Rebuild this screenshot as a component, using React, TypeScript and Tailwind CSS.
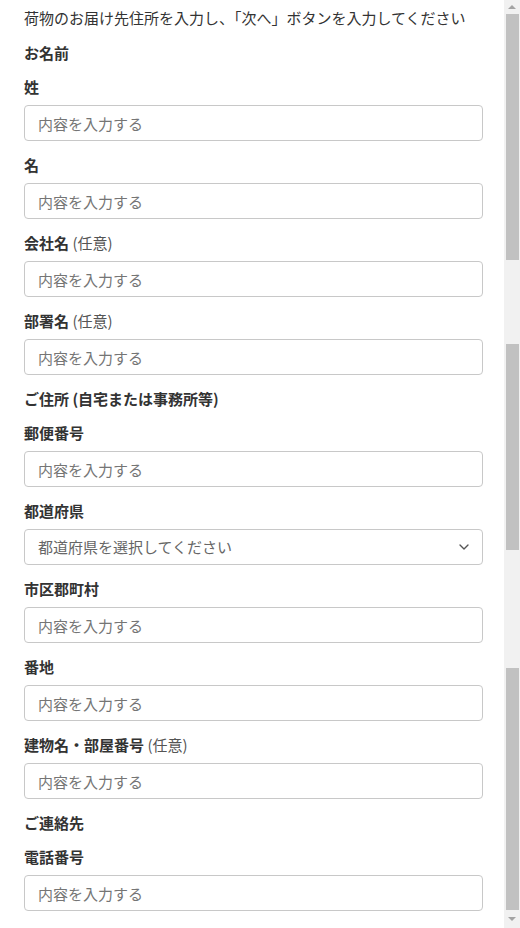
import { ChevronDown } from 'lucide-react';

type Field = { label: string; optional?: boolean; select?: boolean; placeholder?: string };

type Section = { title: string; fields: Field[] };

const sections: Section[] = [
    {
        title: 'お名前',
        fields: [
            { label: '姓' },
            { label: '名' },
            { label: '会社名', optional: true },
            { label: '部署名', optional: true },
        ],
    },
    {
        title: 'ご住所 (自宅または事務所等)',
        fields: [
            { label: '郵便番号' },
            { label: '都道府県', select: true, placeholder: '都道府県を選択してください' },
            { label: '市区郡町村' },
            { label: '番地' },
            { label: '建物名・部屋番号', optional: true },
        ],
    },
    {
        title: 'ご連絡先',
        fields: [{ label: '電話番号' }],
    },
];

function FormField({ field }: { field: Field }) {
    return (
        <div className="mb-[14px]">
            <label className="block h-5 leading-5 text-[15px] font-bold text-[#333]">
                {field.label}
                {field.optional && <span className="font-normal text-[#555]"> (任意)</span>}
            </label>
            {field.select ? (
                <div className="mt-2 h-9 w-full border border-[#c8c8c8] rounded flex items-center justify-between pl-[13px] pr-[10px] text-[15px] text-[#666]">
                    <span>{field.placeholder}</span>
                    <ChevronDown size={16} strokeWidth={2} className="text-[#555]" />
                </div>
            ) : (
                <input
                    className="mt-2 block h-9 w-full border border-[#c8c8c8] rounded px-[13px] text-[15px] text-[#333] placeholder:text-[#757575] outline-none"
                    placeholder="内容を入力する"
                />
            )}
        </div>
    );
}

// drawn scrollbar, the screenshot shows one with a split thumb
function Scrollbar() {
    return (
        <div className="w-4 shrink-0 bg-[#f1f1f1] flex flex-col items-center">
            <div className="h-[14px] flex items-center justify-center">
                <div className="w-0 h-0 border-x-[4px] border-x-transparent border-b-[4px] border-b-[#a3a3a3]" />
            </div>
            <div className="w-[13px] h-[246px] bg-[#c1c1c1]" />
            <div className="w-[13px] h-[206px] mt-[84px] bg-[#c1c1c1]" />
            <div className="w-[13px] h-[242px] mt-[118px] bg-[#c1c1c1]" />
            <div className="flex-1 flex items-center justify-center">
                <div className="w-0 h-0 border-x-[4px] border-x-transparent border-t-[4px] border-t-[#a3a3a3]" />
            </div>
        </div>
    );
}

export default function App() {
    return (
        <div
            className="flex h-[928px] overflow-hidden bg-white text-[#333]"
            style={{ fontFamily: '"Noto Sans CJK JP", "Noto Sans", sans-serif' }}
        >
            <div className="flex-1 pl-6 pr-[21px] pt-2">
                <p className="h-5 leading-5 text-[15px] mb-[15px] whitespace-nowrap">
                    荷物のお届け先住所を入力し、「次へ」ボタンを入力してください
                </p>
                {sections.map((s) => (
                    <div key={s.title}>
                        <h3 className="h-5 leading-5 text-[15px] font-bold mb-[14px]">{s.title}</h3>
                        {s.fields.map((f) => (
                            <FormField key={f.label} field={f} />
                        ))}
                    </div>
                ))}
            </div>
            <Scrollbar />
        </div>
    );
}
